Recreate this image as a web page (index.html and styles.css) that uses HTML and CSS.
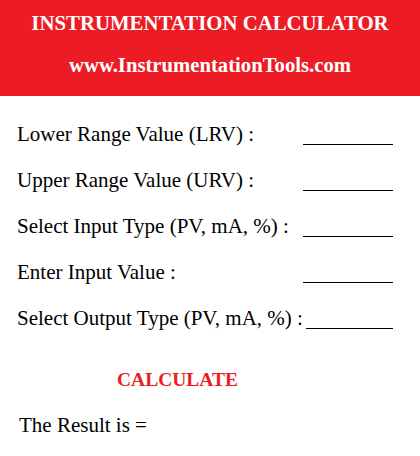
FILE: index.html
```html
<!DOCTYPE html>
<html lang="en">
<head>
    <meta charset="UTF-8">
    <meta name="viewport" content="width=device-width, initial-scale=1.0">
    <title>Instrumentation Calculator</title>
    <link rel="stylesheet" href="styles.css">
</head>
<body>

    <header class="banner">
        <h1>INSTRUMENTATION CALCULATOR</h1>
        <p>www.InstrumentationTools.com</p>
    </header>

    <div class="calc-form">
        <div class="field-row">
            <span class="field-label">Lower Range Value (LRV) :</span>
            <span class="blank"></span>
        </div>
        <div class="field-row">
            <span class="field-label">Upper Range Value (URV) :</span>
            <span class="blank"></span>
        </div>
        <div class="field-row">
            <span class="field-label">Select Input Type (PV, mA, %) :</span>
            <span class="blank"></span>
        </div>
        <div class="field-row">
            <span class="field-label">Enter Input Value :</span>
            <span class="blank"></span>
        </div>
        <div class="field-row">
            <span class="field-label">Select Output Type (PV, mA, %) :</span>
            <span class="blank"></span>
        </div>
    </div>

    <div class="calc-action">CALCULATE</div>

    <p class="result">The Result is =</p>

</body>
</html>
```

FILE: styles.css
```css
body {
    font-family: "Liberation Serif", "Times New Roman", serif;
    background-color: #fff;
    color: #000;
    margin: 0;
    padding: 0;
}

.banner {
    background-color: #ed1c24;
    color: #fff;
    text-align: center;
    height: 96px;
    padding-top: 9px;
    box-sizing: border-box;
}

.banner h1 {
    font-size: 20.8px;
    font-weight: bold;
    margin: 0;
    line-height: 28px;
}

.banner p {
    font-size: 20.7px;
    font-weight: bold;
    margin: 14px 0 0;
    line-height: 28px;
}

.calc-form {
    padding: 24px 27px 0 17px;
    display: flex;
    flex-direction: column;
    gap: 18px;
}

.field-row {
    display: flex;
    justify-content: space-between;
    gap: 3px;
    font-size: 21px;
    line-height: 28px;
}

.field-label {
    flex: none;
}

/* blank line for the value, drawn as a bottom rule */
.blank {
    flex: 0 1 90px;
    align-self: flex-start;
    height: 24px;
    border-bottom: 1px solid #000;
}

.calc-action {
    margin-top: 34px;
    width: 355px;
    text-align: center;
    color: #ed1c24;
    font-weight: bold;
    font-size: 19.5px;
    line-height: 28px;
}

.result {
    margin: 17px 0 0 19px;
    font-size: 21px;
    line-height: 28px;
}
```
